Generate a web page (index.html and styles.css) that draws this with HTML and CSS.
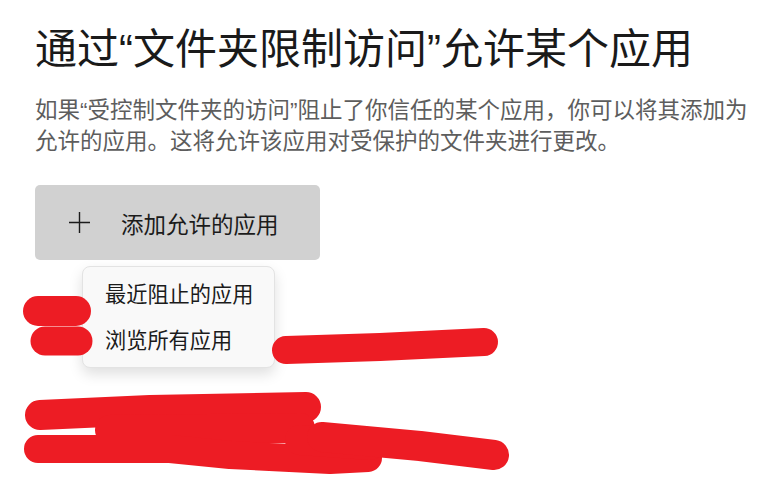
FILE: index.html
```html
<!DOCTYPE html>
<html lang="zh-CN">
<head>
    <meta charset="UTF-8">
    <meta name="viewport" content="width=device-width, initial-scale=1.0">
    <title>允许某个应用</title>
    <link rel="stylesheet" href="styles.css">
</head>
<body>

<div class="page">
    <h1 class="title">通过“文件夹限制访问”允许某个应用</h1>
    <p class="desc">如果“受控制文件夹的访问”阻止了你信任的某个应用，你可以将其添加为允许的应用。这将允许该应用对受保护的文件夹进行更改。</p>

    <div class="add-wrap">
        <button class="add-btn" type="button">
            <svg class="plus" width="23" height="23" viewBox="0 0 23 23">
                <path d="M11.5 1 V22 M1 11.5 H22" stroke="#1b1b1b" stroke-width="1.4" fill="none"/>
            </svg>
            <span>添加允许的应用</span>
        </button>

        <div class="menu">
            <div class="menu-item">最近阻止的应用</div>
            <div class="menu-item">浏览所有应用</div>
        </div>
    </div>

    <!-- redacted parts of the screenshot -->
    <svg class="redact" width="771" height="486" viewBox="0 0 771 486">
        <g stroke="#ed1c24" fill="none" stroke-linecap="round" stroke-linejoin="round">
            <path d="M38 311 L76 311" stroke-width="30"/>
            <path d="M45 341 L78 341" stroke-width="29"/>
            <path d="M286 350 L380 347 L484 342" stroke-width="28"/>
            <path d="M40 415 L150 410 L306 407" stroke-width="30"/>
            <path d="M110 430 L300 428" stroke-width="30"/>
            <path d="M38 449 L170 449 L230 455 L330 460 L368 458" stroke-width="28"/>
            <path d="M300 440 L370 445" stroke-width="30"/>
            <path d="M322 437 L420 446 L494 455" stroke-width="30"/>
        </g>
    </svg>
</div>

</body>
</html>
```

FILE: styles.css
```css
body {
    margin: 0;
    padding: 0;
    background: #ffffff;
    font-family: "Liberation Sans", "Noto Sans CJK SC", sans-serif;
    color: #1b1b1b;
}
.page {
    position: relative;
    width: 771px;
    height: 486px;
    padding: 24px 0 0 35px;
    box-sizing: border-box;
    overflow: hidden;
}
.title {
    margin: 0;
    font-size: 42px;
    font-weight: normal;
    line-height: 52px;
    color: #1a1a1a;
}
.desc {
    margin: 19px 0 0 0;
    width: 722px;
    font-size: 22.5px;
    line-height: 31px;
    color: #5d5d5d;
}
.add-wrap {
    position: relative;
    margin-top: 28px;
    width: 285px;
}
.add-btn {
    display: flex;
    align-items: center;
    width: 285px;
    height: 75px;
    padding: 0 0 0 33px;
    border: none;
    border-radius: 5px;
    background: #d1d1d1;
    font-family: inherit;
    font-size: 22.5px;
    color: #1b1b1b;
    box-sizing: border-box;
}
.plus {
    margin-right: 30px;
    flex-shrink: 0;
}
.menu {
    position: absolute;
    top: 81px;
    left: 47px;
    width: 193px;
    padding: 5px 0 3px 0;
    box-sizing: border-box;
    background: #f9f9f9;
    border: 1px solid #e3e3e3;
    border-radius: 8px;
    box-shadow: 0 6px 14px rgba(0, 0, 0, 0.13);
}
.menu-item {
    height: 46px;
    line-height: 46px;
    padding-left: 22px;
    font-size: 21.2px;
    color: #1b1b1b;
}
.redact {
    position: absolute;
    top: 0;
    left: 0;
    pointer-events: none;
}
```
